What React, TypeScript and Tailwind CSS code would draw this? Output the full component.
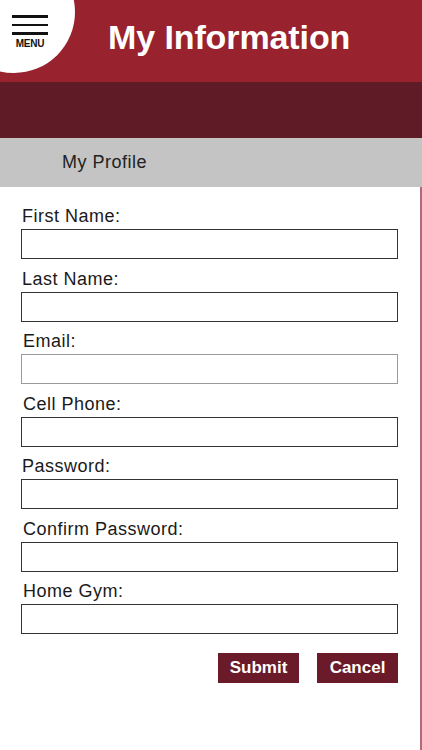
import React from "react";

const fields = [
  { label: "First Name:", indent: false, light: false },
  { label: "Last Name:", indent: false, light: false },
  { label: "Email:", indent: true, light: true },
  { label: "Cell Phone:", indent: true, light: false },
  { label: "Password:", indent: false, light: false },
  { label: "Confirm Password:", indent: true, light: false },
  { label: "Home Gym:", indent: true, light: false },
];

export default function App() {
  return (
    <div className="w-[422px] min-h-[750px] flex flex-col bg-white font-['Liberation_Sans',Arial,sans-serif] text-[#1a1a1a]">
      {/* header */}
      <header className="relative h-[82px] shrink-0 bg-[#98232f] overflow-hidden flex items-center">
        <div className="absolute -left-[47px] -top-[49px] w-[122px] h-[122px] rounded-full bg-white" />
        <button className="absolute left-[12px] top-[15px] flex flex-col items-center">
          <span className="block w-[36px] h-[2.5px] bg-[#111]" />
          <span className="block w-[36px] h-[2.5px] bg-[#111] mt-[6px]" />
          <span className="block w-[36px] h-[2.5px] bg-[#111] mt-[6px]" />
          <span className="text-[10px] leading-[10px] font-bold tracking-[-0.2px] mt-[4px] text-[#111]">MENU</span>
        </button>
        <h1 className="pl-[108px] text-white font-bold text-[34px] leading-none tracking-[-0.1px] pb-[8px]">
          My Information
        </h1>
      </header>

      <div className="h-[56px] shrink-0 bg-[#5f1b26]" />

      <div className="h-[49px] shrink-0 bg-[#c4c4c4] flex items-center pl-[62px]">
        <span className="text-[18px] tracking-[0.5px] text-[#222]">My Profile</span>
      </div>

      <form className="flex-1 px-[21px] pt-[19px] pb-10 border-r-2 border-[#b06a78]">
        <div className="flex flex-col gap-[9.5px]">
          {fields.map((f) => (
            <div key={f.label} className="flex flex-col">
              <label className={`text-[18px] leading-[20px] tracking-[0.5px] mb-[3px] ${f.indent ? "pl-[2px]" : "pl-[1px]"}`}>
                {f.label}
              </label>
              <input
                className={`w-[377px] h-[30px] bg-white outline-none border-[1.5px] ${f.light ? "border-[#9a9a9a]" : "border-[#333]"}`}
              />
            </div>
          ))}
        </div>
        <div className="flex justify-end gap-[18px] mt-[19px] w-[377px]">
          <button type="button" className="w-[81px] h-[30px] bg-[#6a1a28] text-white font-bold text-[17px]">
            Submit
          </button>
          <button type="button" className="w-[81px] h-[30px] bg-[#6a1a28] text-white font-bold text-[17px]">
            Cancel
          </button>
        </div>
      </form>
    </div>
  );
}
